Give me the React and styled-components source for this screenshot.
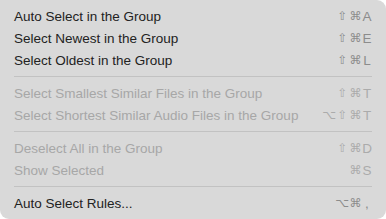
import React from "react";
import styled, { createGlobalStyle } from "styled-components";

const Global = createGlobalStyle`
  html, body { margin: 0; padding: 0; background: #ffffff; }
  body { font-family: "Liberation Sans", Arial, sans-serif; }
`;

const Menu = styled.div`
  width: 386px;
  height: 219px;
  box-sizing: border-box;
  background: #d9d9d9;
  border-radius: 0 9px 9px 9px;
  padding: 5px 14px 5px 14px;
  display: flex;
  flex-direction: column;
`;

const Row = styled.div`
  height: 22px;
  display: flex;
  align-items: center;
  justify-content: space-between;
  font-size: 13.5px;
  color: ${(p) => (p.$disabled ? "#a7a7a7" : "#222222")};
`;

const Keys = styled.span`
  display: flex;
  align-items: center;
  gap: 0;
  color: ${(p) => (p.$disabled ? "#ababab" : "#8c8c8c")};
`;

const Key = styled.span`
  display: inline-block;
  min-width: ${(p) => (p.$sym ? "13px" : "10px")};
  text-align: center;
  font-family: ${(p) => (p.$sym ? '"DejaVu Sans", sans-serif' : '"Liberation Sans", sans-serif')};
  font-size: ${(p) => (p.$sym ? "12px" : "13.5px")};
`;

const Separator = styled.div`
  height: 11px;
  display: flex;
  align-items: center;
  &::after {
    content: "";
    flex: 1;
    height: 1px;
    background: #c2c2c2;
  }
`;

const groups = [
  [
    { label: "Auto Select in the Group", keys: ["⇧", "⌘", "A"] },
    { label: "Select Newest in the Group", keys: ["⇧", "⌘", "E"] },
    { label: "Select Oldest in the Group", keys: ["⇧", "⌘", "L"] },
  ],
  [
    { label: "Select Smallest Similar Files in the Group", keys: ["⇧", "⌘", "T"], disabled: true },
    { label: "Select Shortest Similar Audio Files in the Group", keys: ["⌥", "⇧", "⌘", "T"], disabled: true },
  ],
  [
    { label: "Deselect All in the Group", keys: ["⇧", "⌘", "D"], disabled: true },
    { label: "Show Selected", keys: ["⌘", "S"], disabled: true },
  ],
  [{ label: "Auto Select Rules...", keys: ["⌥", "⌘", ","] }],
];

const isSym = (k) => ["⇧", "⌘", "⌥"].includes(k);

export default function App() {
  return (
    <>
      <Global />
      <Menu>
        {groups.map((g, gi) => (
          <React.Fragment key={gi}>
            {gi > 0 && <Separator />}
            {g.map((item) => (
              <Row key={item.label} $disabled={item.disabled}>
                <span>{item.label}</span>
                <Keys $disabled={item.disabled}>
                  {item.keys.map((k, i) => (
                    <Key key={i} $sym={isSym(k)}>
                      {k}
                    </Key>
                  ))}
                </Keys>
              </Row>
            ))}
          </React.Fragment>
        ))}
      </Menu>
    </>
  );
}
